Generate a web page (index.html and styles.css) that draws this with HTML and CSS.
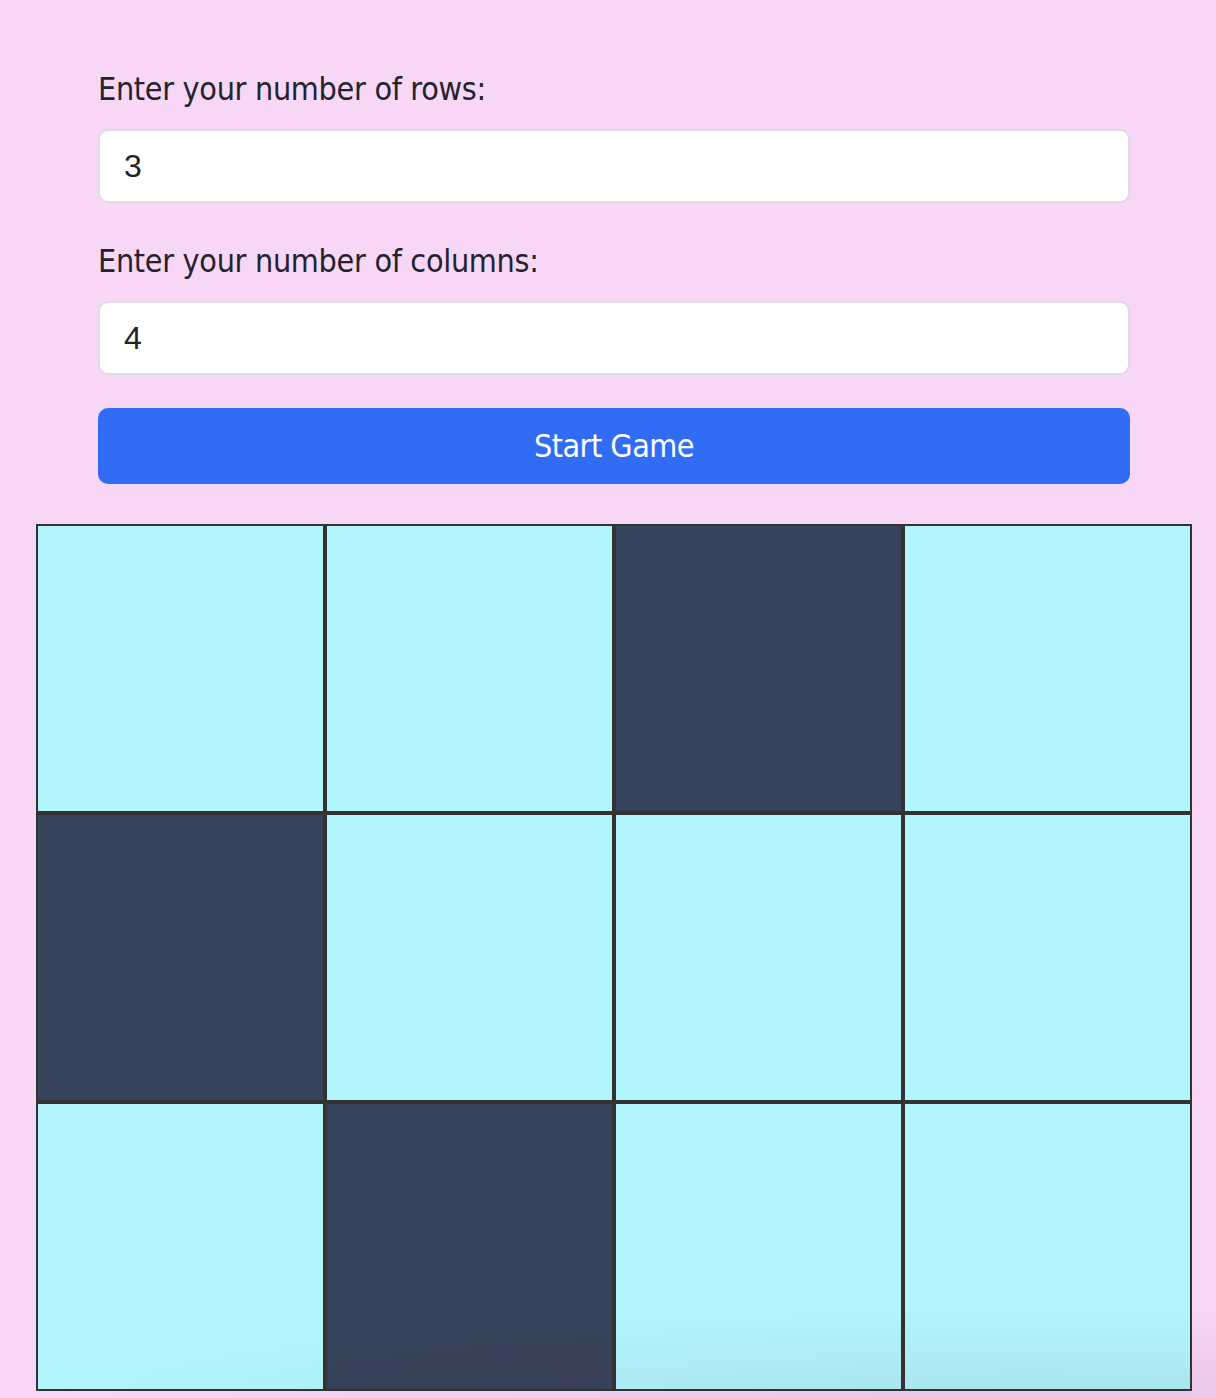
FILE: index.html
```html
<!DOCTYPE html>
<html lang="en">
<head>
<meta charset="utf-8">
<title>Grid Game</title>
<link rel="stylesheet" href="styles.css">
</head>
<body>
<main class="page">
  <form class="setup">
    <label class="field-label" for="rows">Enter your number of rows:</label>
    <input class="field-input" id="rows" type="text" value="3">
    <label class="field-label second" for="cols">Enter your number of columns:</label>
    <input class="field-input" id="cols" type="text" value="4">
    <button class="start-btn" type="button">Start Game</button>
  </form>
  <div class="board">
    <div class="cell"></div>
    <div class="cell"></div>
    <div class="cell dark"></div>
    <div class="cell"></div>
    <div class="cell dark"></div>
    <div class="cell"></div>
    <div class="cell"></div>
    <div class="cell"></div>
    <div class="cell"></div>
    <div class="cell dark"></div>
    <div class="cell"></div>
    <div class="cell"></div>
  </div>
</main>
<div class="bottom-shade"></div>
</body>
</html>
```

FILE: styles.css
```css
html, body {
  margin: 0;
  padding: 0;
}
body {
  background: #f7d6f6;
  font-family: "DejaVu Sans Condensed", "DejaVu Sans", sans-serif;
  color: #23232b;
  overflow: hidden;
}
.page {
  padding: 69px 24px 6px 36px;
}
.setup {
  display: flex;
  flex-direction: column;
  margin: 0 62px 0 62px;
}
.field-label {
  display: block;
  font-size: 32px;
  line-height: 40px;
  letter-spacing: -0.3px;
  margin-bottom: 20px;
}
.field-label.second {
  margin-top: 38px;
}
.field-input {
  box-sizing: border-box;
  height: 74px;
  border: 2px solid #dedce2;
  border-radius: 10px;
  background: #fff;
  padding: 0 24px;
  font-family: "Liberation Sans", Arial, sans-serif;
  font-size: 32px;
  color: #222;
  outline: none;
}
.start-btn {
  margin-top: 33px;
  height: 76px;
  border: none;
  border-radius: 10px;
  background: #316cf4;
  color: #fff;
  font-family: "DejaVu Sans Condensed", "DejaVu Sans", sans-serif;
  font-size: 32px;
  letter-spacing: -0.5px;
  padding: 0;
}
.board {
  margin-top: 40px;
  display: grid;
  grid-template-columns: repeat(4, 289px);
  grid-auto-rows: 289px;
  width: 1156px;
}
.cell {
  box-sizing: border-box;
  border: 2px solid #333333;
  background: #b2f5fc;
}
.cell.dark {
  background: #37435a;
}
.bottom-shade {
  position: fixed;
  left: 0;
  right: 0;
  bottom: 0;
  height: 90px;
  pointer-events: none;
  background: radial-gradient(ellipse 1000px 90px at 85% 100%, rgba(60, 20, 60, 0.08), rgba(60, 20, 60, 0.03) 55%, rgba(60, 20, 60, 0) 100%);
}
```
